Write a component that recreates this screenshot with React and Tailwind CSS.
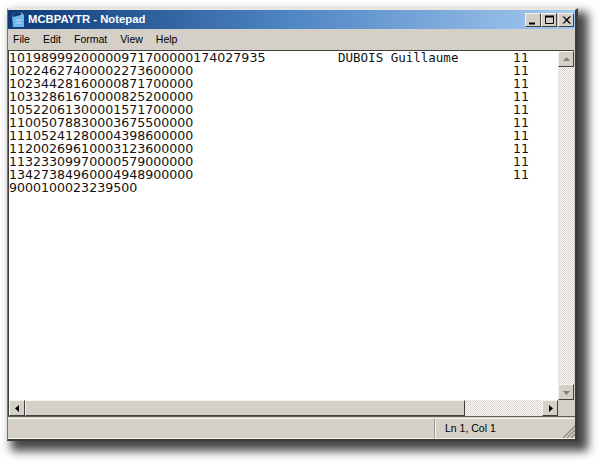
const rows = [
  ["10198999200000971700000174027935", "DUBOIS Guillaume", "11"],
  ["10224627400002273600000", "", "11"],
  ["10234428160000871700000", "", "11"],
  ["10332861670000825200000", "", "11"],
  ["10522061300001571700000", "", "11"],
  ["11005078830003675500000", "", "11"],
  ["11105241280004398600000", "", "11"],
  ["11200269610003123600000", "", "11"],
  ["11323309970000579000000", "", "11"],
  ["13427384960004948900000", "", "11"],
  ["9000100023239500", "", ""],
];

const dither = "bg-[repeating-conic-gradient(#d4d0c8_0%_25%,#ffffff_0%_50%)] bg-[length:2px_2px]";
const raised = "bg-[#d4d0c8] border border-t-[#f4f2ec] border-l-[#f4f2ec] border-r-[#404040] border-b-[#404040] flex items-center justify-center";

function Arrow({ d, color = "#000" }) {
  return (
    <svg width="9" height="9" viewBox="0 0 9 9">
      <path d={d} fill={color} />
    </svg>
  );
}

function WinBtn({ children, cls = "" }) {
  return (
    <div className={`w-4 h-[14px] ${raised} ${cls}`}>
      <svg width="12" height="10" viewBox="0 0 12 10" fill="none" stroke="#000">
        {children}
      </svg>
    </div>
  );
}

export default function App() {
  return (
    <div className="w-[603px] h-[465px] bg-white overflow-hidden pt-[8px] pl-[7px] font-['Liberation_Sans',sans-serif]">
      <div className="w-[571px] h-[433px] flex flex-col bg-[#d4d0c8] border-t-2 border-t-[#e9e6dd] border-l border-l-[#77756f] border-r-[3px] border-r-[#3d3d3d] border-b-2 border-b-[#3d3d3d] shadow-[7px_7px_9px_3px_rgba(25,25,25,0.8)]">
        {/* Title bar */}
        <div className="h-[19px] shrink-0 flex items-center bg-gradient-to-r from-[#0d3a78] via-[#4f86c4] to-[#a6caf0] pl-[2px] pr-[1px]">
          <svg width="16" height="17" viewBox="0 0 16 17" className="shrink-0">
            <path d="M2 3 L11 1 L14 4 L14 16 L3 16 Z" fill="#6fb8e8" />
            <path d="M2 3 L11 1 L11 4 L3 6 Z" fill="#123a6a" />
            <path d="M6 9 H12 M6 12 H12" stroke="#b9e0f4" strokeWidth="1" />
          </svg>
          <span className="ml-[2px] text-[11.300px] leading-none font-bold text-white whitespace-nowrap">MCBPAYTR - Notepad</span>
          <div className="ml-auto flex items-center">
            <WinBtn>
              <path d="M2 8.500 H8" strokeWidth="2" />
            </WinBtn>
            <WinBtn>
              <path d="M2.500 1.500 H10.500 V8.500 H2.500 Z" />
              <path d="M2 1.500 H11" strokeWidth="2" />
            </WinBtn>
            <WinBtn cls="ml-[1px]">
              <path d="M3 1.500 L9.500 8.500 M4 1.500 L10.500 8.500 M9.500 1.500 L3 8.500 M10.500 1.500 L4 8.500" />
            </WinBtn>
          </div>
        </div>
        {/* Menu */}
        <div className="h-[21px] shrink-0 flex items-center gap-[13px] pl-[5px] text-[10.500px] text-black">
          <span>File</span>
          <span>Edit</span>
          <span>Format</span>
          <span>View</span>
          <span>Help</span>
        </div>
        {/* Client */}
        <div className="flex-1 min-h-0 flex flex-col border-t border-t-[#3f3f3f] border-l border-l-[#3f3f3f] mr-[1px]">
          <div className="flex-1 min-h-0 flex">
            <div className="flex-1 min-w-0 bg-white text-[#111111] text-[12.600px] leading-[13px] font-['DejaVu_Sans',sans-serif]">
              {rows.map((r, i) => (
                <div key={i} className="h-[13px] flex whitespace-pre">
                  <span className="w-[329px] shrink-0 overflow-visible">{r[0]}</span>
                  <span className="w-[175px] shrink-0 font-['DejaVu_Sans_Mono',monospace] text-[12.500px]">{r[1]}</span>
                  <span>{r[2]}</span>
                </div>
              ))}
            </div>
            <div className={`w-4 shrink-0 flex flex-col justify-between ${dither}`}>
              <div className={`h-4 ${raised}`}>
                <Arrow d="M1 6 L8 6 L4.500 2 Z" color="#808080" />
              </div>
              <div className={`h-4 ${raised}`}>
                <Arrow d="M1 3 L8 3 L4.500 7 Z" color="#808080" />
              </div>
            </div>
          </div>
          <div className="h-[16px] shrink-0 flex">
            <div className="flex-1 flex min-w-0">
              <div className={`w-4 shrink-0 ${raised}`}>
                <Arrow d="M6 1 L6 8 L2 4.500 Z" />
              </div>
              <div className="w-[440px] shrink-0 bg-[#d4d0c8] border border-t-[#f4f2ec] border-l-[#f4f2ec] border-r-[#404040] border-b-[#404040]" />
              <div className={`flex-1 ${dither}`} />
              <div className={`w-4 shrink-0 ${raised}`}>
                <Arrow d="M3 1 L3 8 L7 4.500 Z" />
              </div>
            </div>
            <div className="w-4 shrink-0 bg-[#d4d0c8]" />
          </div>
        </div>
        {/* Status bar */}
        <div className="h-[23px] shrink-0 flex border-t border-t-[#5f5f5f] pt-[1px]">
          <div className="w-[427px] shrink-0 border-t border-t-[#f4f2ec] border-r border-r-[#9a978f] border-b border-b-[#f4f2ec]" />
          <div className="flex-1 flex items-center justify-between border-t border-t-[#f4f2ec] border-b border-b-[#f4f2ec] border-l border-l-[#f4f2ec] pl-[9px] text-[10.500px] text-black">
            <span>Ln 1, Col 1</span>
            <svg width="13" height="13" viewBox="0 0 13 13" className="self-end" stroke="#8a8880" strokeWidth="1.300">
              <path d="M1 13 L13 1 M5 13 L13 5 M9 13 L13 9" />
            </svg>
          </div>
        </div>
      </div>
    </div>
  );
}
